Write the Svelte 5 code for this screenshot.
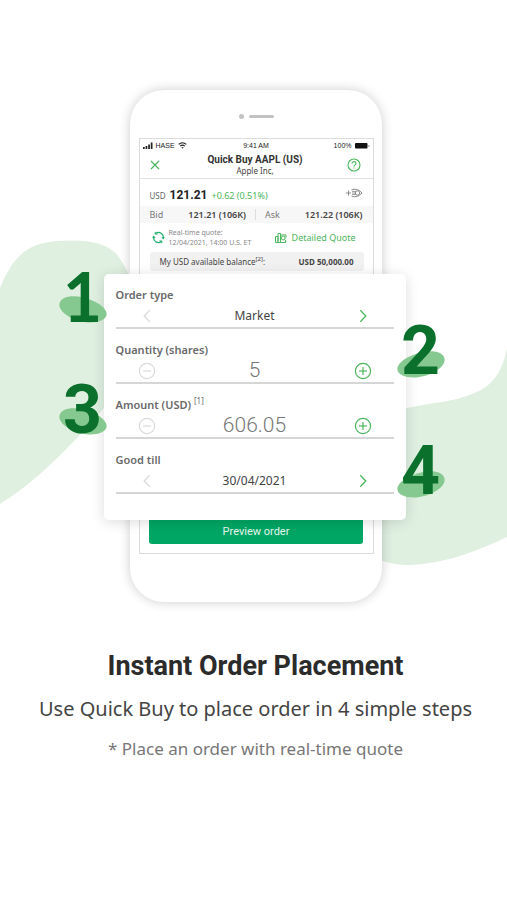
<script>
  let quantity = $state('5');
  let amount = $state('606.05');
</script>

{#snippet arrow(direction)}
  <svg width="18" height="18" viewBox="0 0 18 18" fill="none" stroke="currentColor" stroke-width="1.3" aria-hidden="true">
    {#if direction === 'left'}
      <path d="M11.7 3.3 6.2 9l5.5 5.7" />
    {:else}
      <path d="M6.3 3.3 11.8 9l-5.5 5.7" />
    {/if}
  </svg>
{/snippet}

{#snippet sign(kind)}
  <svg width="18" height="18" viewBox="0 0 18 18" fill="none" stroke="currentColor" stroke-width="1.2" aria-hidden="true">
    <circle cx="9" cy="9" r="7.6" />
    <path d="M5 9h8" />
    {#if kind === 'plus'}<path d="M9 5v8" />{/if}
  </svg>
{/snippet}

{#snippet badge(number, side)}
  <span class="badge {side} n{number}">
    <svg width="48" height="28" viewBox="0 0 48 28" aria-hidden="true">
      {#if side === 'left'}
        <path d="M.4 9C1.5 1.5 13-.2 24 2.400C37 5.500 47 12 47.700 18.500C48 25 38 28.500 27 27.300C13 25.800-.6 17 .4 9Z" fill="#86c990" />
      {:else}
        <path d="M47.600 9C46.500 1.500 35-.2 24 2.400C11 5.500 1 12 .3 18.500C0 25 10 28.500 21 27.300C35 25.800 48.600 17 47.600 9Z" fill="#86c990" />
      {/if}
    </svg>
    <b>{number}</b>
  </span>
{/snippet}

<main>
  <svg class="blobs" viewBox="0 230 507 350" preserveAspectRatio="none" aria-hidden="true">
    <path d="M0 288C14 254 29 243 58 241C86 239 107 242 118 256C135 278 138 310 134 345C128 382 101 414 78 437C54 462 29 486 0 504Z" fill="#dff0e1" />
    <path d="M507 348C502 374 491 387 472 394C445 405 420 402 391 413C350 430 335 480 345 515C355 550 375 564 407 565C441 565 478 551 507 537Z" fill="#dff0e1" />
  </svg>

  <section class="phone">
    <div class="speaker"><i></i><i></i></div>
    <div class="screen">
      <div class="status">
        <span class="carrier">
          <svg width="10" height="7" viewBox="0 0 10 7" aria-hidden="true"><path d="M0 5h1.700v2H0zM2.600 4h1.700v3H2.600zM5.200 2.500h1.700V7H5.200zM7.800.5h1.700V7H7.800z" fill="#222" /></svg>
          HASE
          <svg width="9" height="7" viewBox="0 0 9 7" fill="none" stroke="#222" stroke-width="1.100" aria-hidden="true"><path d="M.7 2.400C2.900.4 6.100.4 8.300 2.400M2.200 4.100c1.400-1.200 3.200-1.200 4.600 0" /><path d="M3.300 5.200 4.500 6.700l1.200-1.500Z" fill="#222" stroke="none" /></svg>
        </span>
        <span>9:41 AM</span>
        <span class="battery">
          100%
          <svg width="15" height="6" viewBox="0 0 15 6" aria-hidden="true"><rect width="12.500" height="5.500" rx="1" fill="#111" /><path d="M13.400 2h.9v2h-.9z" fill="#888" /></svg>
        </span>
      </div>

      <header>
        <button aria-label="Close">
          <svg width="10" height="10" viewBox="0 0 10 10" stroke="#4cb65c" stroke-width="1.200" aria-hidden="true"><path d="m1 1 8 8M9 1 1 9" /></svg>
        </button>
        <div>
          <h2>Quick Buy AAPL (US)</h2>
          <p>Apple Inc,</p>
        </div>
        <button aria-label="Help">
          <svg width="14" height="14" viewBox="0 0 14 14" fill="none" stroke="#4cb65c" stroke-width="1.100" aria-hidden="true"><circle cx="7" cy="7" r="6" /><path d="M5 5.600C5 2.900 9 3.100 9 5.500C9 7 7 6.800 7 8.500M7 9.500v1.100" /></svg>
        </button>
      </header>

      <div class="price">
        <span class="usd">USD</span>
        <strong>121.21</strong>
        <span class="change">+0.62 (0.51%)</span>
        <svg width="17" height="10" viewBox="0 0 17 10" fill="none" stroke="#8a8a8a" aria-hidden="true"><path d="M0 5h5M2.500 2.500v5" /><path d="M5.500 2Q11-.5 16 5Q11 10.500 5.500 8" /><path d="M6 3.500h4M6 5h4M6 6.500h4" stroke-width=".8" /><circle cx="11.500" cy="5" r="2.200" /></svg>
      </div>

      <div class="bids">
        <span>Bid</span><b>121.21 (106K)</b>
        <span class="ask">Ask</span><b>121.22 (106K)</b>
      </div>

      <div class="quote">
        <svg width="13" height="13" viewBox="0 0 13 13" fill="none" stroke="#20ad6b" stroke-width="1.300" aria-hidden="true"><path d="M3.600 2.500C7.500-.3 11.900 3 11.300 7M9.400 10.500C5.500 13.300 1.100 10 1.700 6" /><path d="m9.300 6.200 2 2.300 1.600-2.300ZM.1 6.800l1.600-2.300 2 2.300Z" fill="#20ad6b" stroke="none" /><path d="M3.200.8v2.300h2.300M9.800 12.200V9.900H7.500" stroke-width="1" /></svg>
        <p>Real-time quote:<br />12/04/2021, 14:00 U.S. ET</p>
        <a href="#quote">
          <svg width="12" height="12" viewBox="0 0 12 12" fill="none" stroke="#4cb65c" aria-hidden="true"><path d="M.5 4.500h2.500v6H.5zM3 1.500h2.500v9H3zM5.500 10.500h5v-2M5.500 3h5.500v2.500" /><circle cx="8.200" cy="6" r="1.900" /><path d="m9.500 7.400 2 2" /></svg>
          Detailed Quote
        </a>
      </div>

      <div class="balance">
        <span>My USD available balance<sup>[2]</sup>:</span>
        <b>USD 50,000.00</b>
      </div>

      <form class="card" onsubmit={(e) => e.preventDefault()}>
        <div class="field">
          <span class="label" id="type">Order type</span>
          <div class="control">
            <button type="button" class="off" aria-label="Previous order type">{@render arrow('left')}</button>
            <output aria-labelledby="type">Market</output>
            <button type="button" aria-label="Next order type">{@render arrow('right')}</button>
          </div>
          {@render badge(1, 'left')}
        </div>
        <div class="field">
          <label class="label" for="quantity">Quantity (shares)</label>
          <div class="control">
            <button type="button" class="off" aria-label="Fewer shares">{@render sign('minus')}</button>
            <input id="quantity" inputmode="numeric" bind:value={quantity} />
            <button type="button" aria-label="More shares">{@render sign('plus')}</button>
          </div>
          {@render badge(2, 'right')}
        </div>
        <div class="field">
          <label class="label" for="amount">Amount (USD) <sup>[1]</sup></label>
          <div class="control">
            <button type="button" class="off" aria-label="Lower amount">{@render sign('minus')}</button>
            <input id="amount" inputmode="decimal" bind:value={amount} />
            <button type="button" aria-label="Higher amount">{@render sign('plus')}</button>
          </div>
          {@render badge(3, 'left')}
        </div>
        <div class="field">
          <span class="label" id="till">Good till</span>
          <div class="control">
            <button type="button" class="off" aria-label="Earlier date">{@render arrow('left')}</button>
            <output aria-labelledby="till">30/04/2021</output>
            <button type="button" aria-label="Later date">{@render arrow('right')}</button>
          </div>
          {@render badge(4, 'right')}
        </div>
      </form>

      <button class="preview">Preview order</button>
    </div>
  </section>

  <section class="copy">
    <h1>Instant Order Placement</h1>
    <p class="lead">Use Quick Buy to place order in 4 simple steps</p>
    <p class="note">* Place an order with real-time quote</p>
  </section>
</main>

<style>
  :global(body) { margin: 0; background: #fff; }
  main {
    position: relative;
    min-height: 100vh;
    box-sizing: border-box;
    padding: 90px 0 0 4px;
    overflow: hidden;
    font-family: "Noto Sans", "Open Sans", sans-serif;
    color: #444;
  }
  h1, h2, p { margin: 0; }
  button { padding: 0; border: 0; background: none; font: inherit; color: inherit; cursor: pointer; }
  svg { display: block; flex: none; }
  .blobs { position: absolute; top: 230px; left: 0; width: 100%; height: 350px; }

  .phone {
    position: relative;
    width: 252px;
    box-sizing: border-box;
    margin: 0 auto;
    padding: 0 8px 48px 9px;
    border-radius: 34px;
    background: #fff;
    box-shadow: 0 0 12px rgba(0, 0, 0, 0.2);
  }
  .speaker { display: flex; align-items: center; justify-content: center; gap: 5px; height: 48px; padding-top: 4px; box-sizing: border-box; }
  .speaker i { width: 25px; height: 3px; border-radius: 2px; background: #c2c2c2; }
  .speaker i:first-child { width: 5px; height: 5px; border-radius: 50%; }
  .screen { border: 1px solid #dcdcdc; padding-bottom: 9px; }

  .status {
    display: grid;
    grid-template-columns: 1fr auto 1fr;
    align-items: center;
    height: 13px;
    padding: 0 3px;
    font: 7px/13px "Liberation Sans", Arial, sans-serif;
    color: #222;
  }
  .carrier, .battery { display: flex; align-items: center; gap: 3px; }
  .battery { justify-content: flex-end; }

  header {
    display: grid;
    grid-template-columns: 1fr auto 1fr;
    align-items: center;
    height: 26px;
    padding: 0 12px 0 10px;
    border-bottom: 1px solid #e2e2e2;
    text-align: center;
  }
  header button:last-child { justify-self: end; }
  header button:first-child { justify-self: start; }
  h2 { font: 700 10px/12px Roboto, sans-serif; color: #333; }
  header p { font-size: 8px; line-height: 10px; }

  .price { display: flex; align-items: baseline; gap: 4px; height: 27px; padding: 0 10px; line-height: 32px; box-sizing: border-box; }
  .usd { font-size: 8px; color: #666; }
  .price strong { font: 700 12px/32px Roboto, sans-serif; color: #222; }
  .change { font-size: 9px; color: #4cb65c; }
  .price svg { margin-left: auto; align-self: center; }

  .bids { display: flex; align-items: center; height: 17px; padding: 0 10px; background: #f7f7f7; font-size: 9px; color: #777; }
  .bids b { margin-left: auto; font-weight: 600; color: #444; }
  .ask { margin-left: 9px; padding-left: 9px; border-left: 1px solid #ddd; line-height: 11px; }

  .quote { display: flex; align-items: center; gap: 4px; height: 29px; padding: 0 17px 0 12px; font-size: 7px; line-height: 10px; color: #888; }
  .quote a { display: flex; align-items: center; gap: 5px; margin-left: auto; font-size: 9px; color: #4cb65c; text-decoration: none; white-space: nowrap; }
  .quote p { white-space: nowrap; }

  .balance { display: flex; align-items: center; justify-content: space-between; height: 19px; margin: 0 9px 3px 10px; padding: 0 10px; border-radius: 3px; background: #f1f1f1; font-size: 8px; white-space: nowrap; }
  .balance b { font-weight: 700; }
  sup { font-size: 6px; line-height: 0; vertical-align: 4px; }

  .card {
    position: relative;
    margin: 0 -33px 0 -36px;
    padding: 0 12px 26px;
    border-radius: 5px;
    background: #fff;
    box-shadow: 0 2px 14px rgba(0, 0, 0, 0.14);
  }
  .field { position: relative; padding-top: 12px; border-bottom: 2px solid #d6d6d6; }
  .label { display: block; font-size: 11px; font-weight: 600; line-height: 18px; color: #6a6a6a; }
  .label sup { font-size: 8px; font-weight: 400; vertical-align: 5px; }
  .control { display: flex; align-items: center; justify-content: space-between; height: 23px; padding: 0 22px; color: #4cb65c; }
  .control .off { color: #dadada; }
  output { font-size: 12px; line-height: 18px; color: #444; }
  input { flex: 1; min-width: 0; height: 23px; padding: 0; border: 0; outline: 0; background: none; text-align: center; font: 300 21px/23px Roboto, sans-serif; color: #777; }

  .badge { position: absolute; top: 21px; width: 48px; height: 28px; }
  .left { left: -57px; }
  .right { right: -51px; }
  .badge b { position: absolute; left: 0; width: 48px; bottom: 2px; text-align: center; font: 700 68px/50px Roboto, sans-serif; color: #0b702c; }
  .n1 b { font-family: Lato, sans-serif; }
  .n3 { top: 23px; }
  .n3 b { bottom: 0; }
  .n4 { top: 31px; }

  .preview {
    display: block;
    width: 214px;
    height: 24px;
    margin: 0 auto;
    border-radius: 0 0 3px 3px;
    background: #00a664;
    color: #e6f7ee;
    font: 400 11px/20px Roboto, sans-serif;
  }

  .copy { padding-top: 48px; text-align: center; }
  h1 { font: 700 27px/32px Roboto, sans-serif; color: #2b2b2b; }
  .lead { margin-top: 13px; font-size: 20px; line-height: 28px; }
  .note { margin-top: 14px; font-size: 17px; line-height: 24px; color: #777; }
</style>
